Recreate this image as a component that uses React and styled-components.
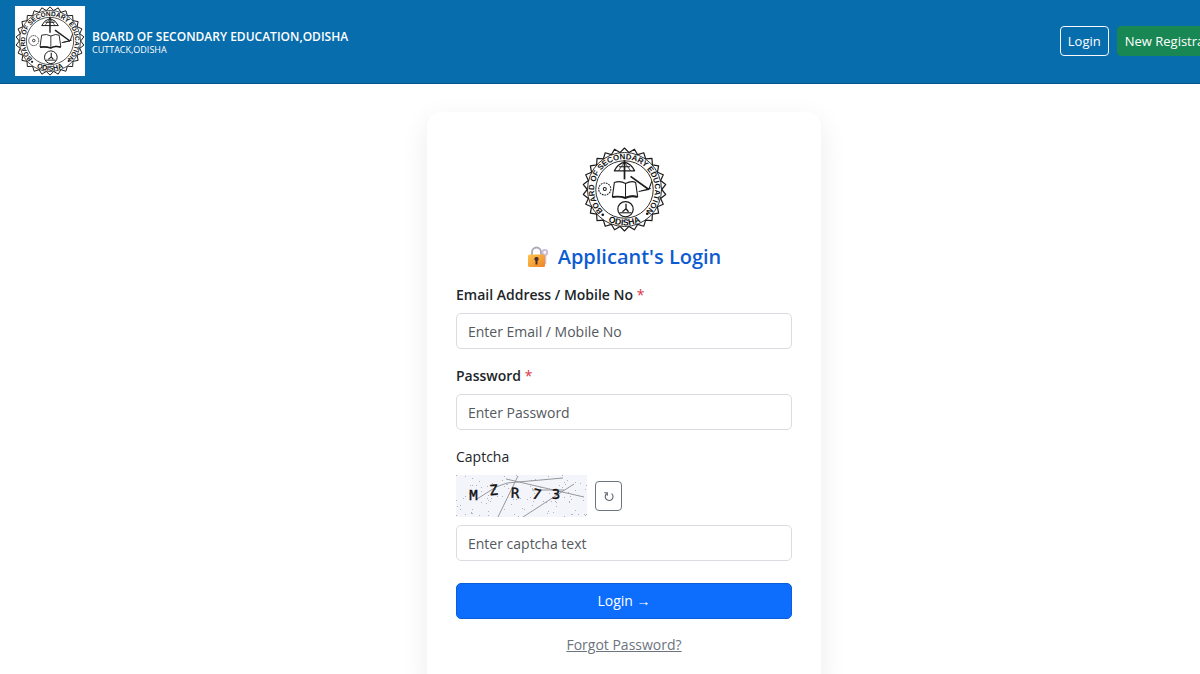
import React, { useId } from "react";
import styled, { createGlobalStyle } from "styled-components";

const GlobalStyle = createGlobalStyle`
  *, *::before, *::after { box-sizing: border-box; }
  html { scrollbar-width: none; }
  body {
    margin: 0;
    background: #fff;
    color: #212529;
    font-family: "Segoe UI", "Open Sans", "Noto Sans", sans-serif;
    font-size: 14px;
    line-height: 22px;
  }
`;

const Page = styled.div`
  overflow-x: clip;
`;

const Header = styled.header`
  width: 104%;
  height: 84px;
  padding: 0 12px 2px 15px;
  display: flex;
  align-items: center;
  justify-content: space-between;
  background: #086dac;
  border-bottom: 1px solid #07548a;
`;

const Brand = styled.a`
  display: flex;
  align-items: center;
  gap: 7px;
  color: #fff;
  text-decoration: none;
`;

const BrandText = styled.span`
  padding-top: 3px;
  display: flex;
  flex-direction: column;
`;

const BrandName = styled.strong`
  font-size: 12px;
  line-height: 15px;
  font-weight: 600;
`;

const BrandPlace = styled.span`
  font-size: 9px;
  line-height: 12px;
`;

const Nav = styled.nav`
  display: flex;
  gap: 8px;
`;

const NavButton = styled.button`
  height: 30px;
  padding: 0 7px;
  border: 1px solid ${(p) => (p.$solid ? "#198754" : "#f8f9fa")};
  border-radius: 4px;
  background: ${(p) => (p.$solid ? "#198754" : "transparent")};
  color: #fff;
  font: inherit;
  font-size: 13px;
  white-space: nowrap;
  cursor: pointer;
`;

const Main = styled.main`
  width: 104%;
  padding: 28px 0;
  display: flex;
  justify-content: center;
`;

const Card = styled.section`
  flex: 0 1 394px;
  padding: 33px 29px 36px;
  display: flex;
  flex-direction: column;
  align-items: center;
  border-radius: 14px;
  background: #fff;
  box-shadow: 0 8px 28px rgba(0, 0, 0, 0.08);
`;

const SealSvg = styled.svg`
  display: block;
  flex: none;
  background: #fff;
`;

const Title = styled.h1`
  margin: 8px 0 12px;
  display: flex;
  align-items: center;
  gap: 9px;
  color: #0d5bd1;
  font-size: 20px;
  line-height: 30px;
  font-weight: 600;
`;

const Form = styled.form`
  width: 100%;
  display: flex;
  flex-direction: column;
`;

const Field = styled.div`
  display: flex;
  flex-direction: column;
  margin-bottom: ${(p) => (p.$last ? 22 : 16)}px;
`;

const Label = styled.label`
  margin-bottom: 7px;
  font-weight: ${(p) => (p.$strong ? 600 : 400)};
`;

const Required = styled.span`
  color: #dc3545;
  font-weight: 400;
`;

const Input = styled.input`
  width: 100%;
  height: 36px;
  padding: 0 11px;
  border: 1px solid #d9dde1;
  border-radius: 5px;
  background: #fff;
  color: #212529;
  font: inherit;
  &::placeholder { color: #54595e; opacity: 1; }
`;

const CaptchaRow = styled.div`
  display: flex;
  align-items: center;
  gap: 8px;
  margin-bottom: 8px;
`;

const CaptchaSvg = styled.svg`
  display: block;
  background: #f4f5fa;
`;

const RefreshButton = styled.button`
  width: 27px;
  height: 30px;
  padding: 0;
  display: grid;
  place-items: center;
  border: 1px solid #6c757d;
  border-radius: 4px;
  background: #fff;
  color: #5c636a;
  cursor: pointer;
`;

const SubmitButton = styled.button`
  height: 36px;
  border: 1px solid #0b5ed7;
  border-radius: 5px;
  background: #0d6efd;
  color: #fff;
  font: inherit;
  font-weight: 500;
  cursor: pointer;
`;

const Arrow = styled.span`
  font-family: "Liberation Sans", sans-serif;
`;

const ForgotLink = styled.a`
  margin-top: 15px;
  align-self: center;
  color: #6c757d;
`;

const SCALLOPS = 26;

function point(radius, turn) {
  const a = turn * 2 * Math.PI - Math.PI / 2;
  return `${(radius * Math.cos(a)).toFixed(2)} ${(radius * Math.sin(a)).toFixed(2)}`;
}

const scallopPath = Array.from({ length: SCALLOPS }, (_, i) => {
  const start = i === 0 ? `M${point(36.8, -0.5 / SCALLOPS)}` : "";
  return `${start}L${point(41, i / SCALLOPS)}L${point(36.8, (i + 0.5) / SCALLOPS)}`;
}).join("");

function Seal({ size, radius = 44 }) {
  const id = useId();
  return (
    <SealSvg
      width={size}
      height={size}
      viewBox={`${-radius} ${-radius} ${radius * 2} ${radius * 2}`}
      role="img"
      aria-label="Board seal"
      fill="none"
      stroke="#1c1c1c"
      strokeWidth="1"
      strokeLinejoin="round"
    >
      <defs>
        <path id={`${id}top`} d="M-21 21.500A30 30 0 1 1 21 21.500" />
        <path id={`${id}low`} d="M-25 25.2A35.5 35.5 0 0 0 25 25.2" />
      </defs>
      <path d={`${scallopPath}Z`} strokeWidth="1.2" />
      <circle r="36.6" strokeWidth="0.9" />
      <circle r="28.4" strokeWidth="0.9" />
      <g fill="#111" stroke="none" fontFamily='"Liberation Sans", sans-serif' fontWeight="700">
        <text textAnchor="middle" fontSize="7.8">
          <textPath href={`#${id}top`} startOffset="50%">BOARD OF SECONDARY EDUCATION</textPath>
        </text>
        <text textAnchor="middle" fontSize="8.6">
          <textPath href={`#${id}low`} startOffset="50%">ODISHA</textPath>
        </text>
        <circle cx="-21.500" cy="25" r="1.3" />
        <circle cx="22.500" cy="24" r="1.3" />
      </g>
      {/* umbrella */}
      <path d="M-10-18.500Q-7-25 0-27Q7-25 10-18.500ZM-5.500-22.500H5.500" strokeWidth="1.2" />
      <path d="M-6-18.500L0-27L6-18.500" strokeWidth=".8" />
      <path d="M0-29V-10" strokeWidth="1.7" />
      {/* open book */}
      <path d="M-10-7Q-4-9 1-6Q7-9 11-7L13 7Q6 5 1 8Q-5 6-12 7Z" strokeWidth="1.1" />
      <path d="M-12 7.500Q-5 6.500 1 8.500Q6 5.500 13 7.500" strokeWidth="1.7" />
      <path d="M1-6V8" />
      {/* wheel */}
      <circle cx="-19.500" cy="-.5" r="6" strokeDasharray="1.8 .8" />
      <circle cx="-19.500" cy="-.5" r="1.500" />
      {/* plough */}
      <path d="M6-13L24 0" strokeWidth="1.7" />
      <path d="M14 2L24 0L27-8M16 1.500L26-1" strokeWidth="1.1" />
      {/* lamp */}
      <circle cx="1" cy="19.500" r="7.600" strokeWidth="1.2" />
      <path d="M1.500 14V19L-2 22M1.500 19L4 22" strokeWidth="1.3" />
      <path d="M-5 23H7" strokeWidth="1.1" />
    </SealSvg>
  );
}

function LockKey() {
  const id = useId();
  return (
    <svg width="22" height="22" viewBox="0 0 22 22" aria-hidden="true">
      <defs>
        <linearGradient id={id} x1="0" y1="0" x2="1" y2="1">
          <stop offset="0" stopColor="#ffc34d" />
          <stop offset="1" stopColor="#ee8426" />
        </linearGradient>
      </defs>
      <g fill="none" stroke="#cdbdd6" strokeWidth="2">
        <circle cx="17.800" cy="6.500" r="2.400" />
        <path d="M18.300 9V18" />
      </g>
      <path d="M5 10V6a4.500 4.500 0 0 1 9 0V10" fill="none" stroke="#a9a8b4" strokeWidth="1.800" />
      <rect x="1" y="8.500" width="17" height="12.500" rx="1.500" fill={`url(#${id})`} />
      <path d="M9.500 11a2 2 0 0 1 1 3.800V18.500H8.500V14.800a2 2 0 0 1 1-3.800Z" fill="#473029" />
    </svg>
  );
}

const GLYPHS = [
  ["M", 17.5, 25, 0],
  ["Z", 38, 20, -4],
  ["R", 59, 23, 2],
  ["7", 79.5, 24, 14],
  ["3", 100, 24, 0],
];

const SPECKS = Array.from({ length: 110 }, (_, i) => ({
  x: (i * 47 + ((i * i * 13) % 31)) % 131,
  y: (i * 17 + ((i * i * 7) % 23)) % 42,
}));

function CaptchaImage() {
  return (
    <CaptchaSvg width="131" height="42" viewBox="0 0 131 42" role="img" aria-label="Captcha image">
      <g fill="#b0b2bc">
        {SPECKS.map((s, i) => (
          <rect key={i} x={s.x} y={s.y} width="1" height="1" />
        ))}
      </g>
      <g stroke="#95979c" strokeWidth="1" fill="none">
        <path d="M21 24L40 12L51 8L107 3M50 4L128 22M62 1L42 42M67 42L118 9M76 15L108 15" />
      </g>
      <g
        fill="#111"
        stroke="#111"
        strokeWidth="0.4"
        fontFamily='"DejaVu Sans Mono", monospace'
        fontSize="14"
        textAnchor="middle"
      >
        {GLYPHS.map(([c, x, y, turn]) => (
          <text key={c} transform={`translate(${x} ${y}) rotate(${turn})`}>{c}</text>
        ))}
      </g>
    </CaptchaSvg>
  );
}

function RefreshIcon() {
  return (
    <svg width="12" height="12" viewBox="0 0 12 12" fill="none" stroke="currentColor" strokeWidth="1.1" aria-hidden="true">
      <path d="M3.800 3.500A3.900 3.900 0 1 0 8.600 3.600" />
      <path d="M1.300 2.700H4.300V5.700" />
    </svg>
  );
}

export default function App() {
  return (
    <Page>
      <GlobalStyle />
      <Header>
        <Brand href="#home">
          <Seal size={70} radius={42} />
          <BrandText>
            <BrandName>BOARD OF SECONDARY EDUCATION,ODISHA</BrandName>
            <BrandPlace>CUTTACK,ODISHA</BrandPlace>
          </BrandText>
        </Brand>
        <Nav>
          <NavButton type="button">Login</NavButton>
          <NavButton type="button" $solid>New Registration</NavButton>
        </Nav>
      </Header>
      <Main>
        <Card>
          <Seal size={89} />
          <Title>
            <LockKey />
            Applicant's Login
          </Title>
          <Form onSubmit={(e) => e.preventDefault()}>
            <Field>
              <Label htmlFor="user" $strong>
                Email Address / Mobile No <Required>*</Required>
              </Label>
              <Input id="user" type="text" placeholder="Enter Email / Mobile No" />
            </Field>
            <Field>
              <Label htmlFor="password" $strong>
                Password <Required>*</Required>
              </Label>
              <Input id="password" type="password" placeholder="Enter Password" />
            </Field>
            <Field $last>
              <Label htmlFor="captcha">Captcha</Label>
              <CaptchaRow>
                <CaptchaImage />
                <RefreshButton type="button" aria-label="Refresh captcha">
                  <RefreshIcon />
                </RefreshButton>
              </CaptchaRow>
              <Input id="captcha" type="text" placeholder="Enter captcha text" />
            </Field>
            <SubmitButton type="submit">
              Login <Arrow>→</Arrow>
            </SubmitButton>
            <ForgotLink href="#forgot">Forgot Password?</ForgotLink>
          </Form>
        </Card>
      </Main>
    </Page>
  );
}
